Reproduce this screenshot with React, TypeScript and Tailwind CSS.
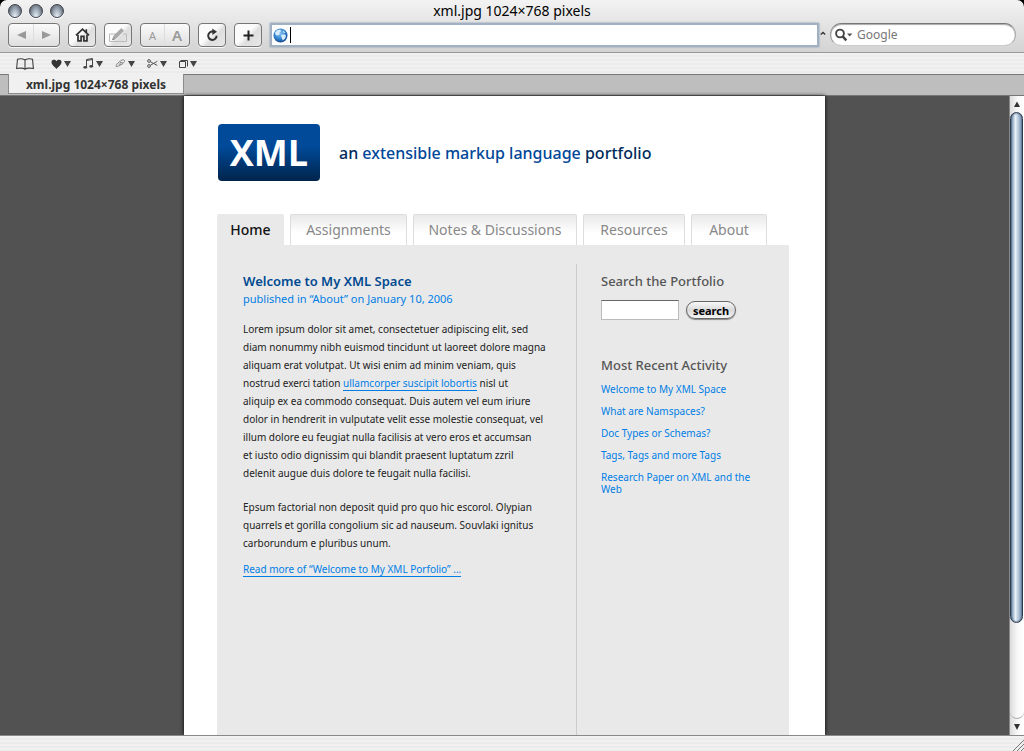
import { ReactNode } from 'react'

const navTabs = [
  { label: 'Home', width: 'w-[67px]', active: true },
  { label: 'Assignments', width: 'w-[117px]', active: false },
  { label: 'Notes & Discussions', width: 'w-[164px]', active: false },
  { label: 'Resources', width: 'w-[102px]', active: false },
  { label: 'About', width: 'w-[76px]', active: false },
]

const recentActivity = [
  'Welcome to My XML Space',
  'What are Namspaces?',
  'Doc Types or Schemas?',
  'Tags, Tags and more Tags',
  'Research Paper on XML and the Web',
]

const pinstripes =
  'bg-[repeating-linear-gradient(180deg,#f1f1f1_0px,#f1f1f1_2px,#ebebeb_2px,#ebebeb_4px)]'

function WindowButton({ label }: { label: string }) {
  return (
    <button
      type="button"
      aria-label={label}
      className="h-[14px] w-[14px] rounded-full border border-[#3e434b] bg-[radial-gradient(ellipse_at_50%_100%,#eef6fc_0%,#a3afbc_45%,#646d78_80%)] shadow-[0_1px_0_#ffffff]"
    />
  )
}

interface ToolButtonProps {
  label: string
  children: ReactNode
}

function ToolButton({ label, children }: ToolButtonProps) {
  return (
    <button
      type="button"
      aria-label={label}
      className="flex h-6 w-7 shrink-0 items-center justify-center rounded-[4px] border border-[#777777] bg-[linear-gradient(135deg,#fbfbfb_45%,#dedede_60%,#e8e8e8)] shadow-[0_1px_0_#f8f8f8]"
    >
      {children}
    </button>
  )
}

function ToolGroup({ children }: { children: ReactNode }) {
  return (
    <div className="flex h-6 shrink-0 items-stretch divide-x divide-[#dddddd] rounded-[4px] border border-[#777777] bg-linear-to-b from-[#fafafa] via-[#ededed] to-[#dfdfdf] shadow-[0_1px_0_#f8f8f8]">
      {children}
    </div>
  )
}

function BookmarkMenu({ label, children }: ToolButtonProps) {
  return (
    <button type="button" aria-label={label} className="flex h-5 items-center gap-[2px]">
      {children}
      <svg width="7" height="6" viewBox="0 0 7 6">
        <path d="M0 0h7L3.5 6z" fill="#444" />
      </svg>
    </button>
  )
}

function TitleBar() {
  return (
    <div className="relative flex h-[22px] items-center px-2">
      <div className="flex gap-[7px]">
        <WindowButton label="Close" />
        <WindowButton label="Minimize" />
        <WindowButton label="Zoom" />
      </div>
      <h1 className="absolute inset-x-0 text-center text-[14px] leading-[22px] text-black">
        xml.jpg 1024×768 pixels
      </h1>
    </div>
  )
}

function Toolbar() {
  return (
    <div className="flex h-[30px] items-start gap-2 px-2 pt-px">
      <ToolGroup>
        <button type="button" aria-label="Back" className="flex w-[25px] items-center justify-center">
          <svg width="9" height="8" viewBox="0 0 9 8">
            <path d="M9 0v8L0 4z" fill="#999" />
          </svg>
        </button>
        <button type="button" aria-label="Forward" className="flex w-[25px] items-center justify-center">
          <svg width="9" height="8" viewBox="0 0 9 8">
            <path d="M0 0v8l9-4z" fill="#999" />
          </svg>
        </button>
      </ToolGroup>
      <ToolButton label="Home">
        <svg width="15" height="14" viewBox="0 0 15 14" fill="none" stroke="#333" strokeWidth="1.7">
          <path d="M1 7.4 7.5 1.2 14 7.4M11.3 4.5V1.2" />
          <path d="M3 6.8v6.1h3.1V8.3h2.8v4.6H12V6.8" />
        </svg>
      </ToolButton>
      <ToolButton label="AutoFill">
        <svg width="20" height="16" viewBox="0 0 20 16" className="shrink-0" fill="none">
          <path d="M8 7H1.500v7.500h17V7H15" stroke="#bbb" />
          <path d="M4.500 12.500 6 8.800 13.300 1.500l2.200 2.200-7.300 7.300z" fill="#aaa" stroke="#999" strokeWidth=".7" />
          <path d="m4.500 12.500 2.200-.6" stroke="#777" />
        </svg>
      </ToolButton>
      <ToolGroup>
        <button type="button" aria-label="Smaller text" className="w-6 pt-px text-[11px] leading-none text-[#999999]">
          A
        </button>
        <button type="button" aria-label="Larger text" className="w-6 text-[15px] leading-none font-semibold text-[#999999]">
          A
        </button>
      </ToolGroup>
      <ToolButton label="Reload">
        <svg width="13" height="14" viewBox="0 0 13 14">
          <path d="M10.6 7.8A4.2 4.2 0 1 1 7 3.6" fill="none" stroke="#333" strokeWidth="2" />
          <path d="M6.3.5 11 3.8 6.3 7z" fill="#333" />
        </svg>
      </ToolButton>
      <ToolButton label="Add bookmark">
        <svg width="11" height="11" viewBox="0 0 11 11">
          <path d="M5.5.5v10M.5 5.5h10" stroke="#222" strokeWidth="2" />
        </svg>
      </ToolButton>
      <div className="flex h-6 min-w-0 flex-1 items-center gap-[2px] border-2 border-[#a2b1c2] bg-white pl-px shadow-[0_0_2px_#8396aa]">
        <svg width="15" height="15" viewBox="0 0 15 15" className="shrink-0">
          <defs>
            <radialGradient id="globe" cx="45%" cy="35%" r="65%">
              <stop offset="0" stopColor="#8fc6f5" />
              <stop offset=".6" stopColor="#3385d2" />
              <stop offset="1" stopColor="#15468c" />
            </radialGradient>
          </defs>
          <circle cx="7.5" cy="7.5" r="7" fill="url(#globe)" />
          <path d="M2 4.5 4.5 2l3-.3.5 1.5-1.6 1.2.4 1.6-2.2 1.4L2.7 7z" fill="#d8ecfb" />
          <path d="m8 7 3.2-.8 1.8 1.5-1 2.8-2.2 2-1-2.3z" fill="#d8ecfb" />
          <path d="m10 2.5 2.3 1.8-.8.9-1.8-.9z" fill="#b9dcf6" />
        </svg>
        <span className="h-4 w-px shrink-0 bg-black" />
        <input aria-label="Address" className="h-full min-w-0 flex-1 bg-transparent text-[13px] outline-none" />
      </div>
      <div className="-ml-2 flex shrink-0 items-start gap-1">
        <svg width="7" height="24" viewBox="0 0 7 24">
          <path d="m1.800 11.500 2.200-2 2.200 2" fill="none" stroke="#333" strokeWidth="1.3" />
        </svg>
        <div className="flex h-[23px] w-[186px] items-center rounded-full border border-t-[#777777] border-r-[#aaaaaa] border-b-[#cccccc] border-l-[#999999] bg-white pl-1 shadow-[inset_0_1px_1px_#aaaaaa]">
          <svg width="18" height="14" viewBox="0 0 18 14" className="shrink-0">
            <circle cx="5" cy="5.5" r="3.9" fill="none" stroke="#444" strokeWidth="1.9" />
            <path d="m7.7 8.4 3.6 4" stroke="#444" strokeWidth="2.4" />
            <path d="M12 5.5h5.4l-2.7 3z" fill="#555" />
          </svg>
          <input
            aria-label="Google search"
            placeholder="Google"
            className="ml-1 min-w-0 flex-1 bg-transparent text-[12px] leading-4 outline-none placeholder:text-[#777777]"
          />
        </div>
      </div>
    </div>
  )
}

function BookmarksBar() {
  return (
    <div className={`flex h-[22px] items-center border-t border-[#999999] px-4 ${pinstripes}`}>
      <button type="button" aria-label="Show all bookmarks" className="mr-[17px]">
        <svg width="18" height="12" viewBox="0 0 18 12" fill="none" stroke="#444" strokeWidth="1.1">
          <path d="M9 2C7.500.6 3.500.3 1.500 1.200L.6 10.600c2.200-.7 6.500-.7 8.400.6 1.900-1.300 6.200-1.300 8.400-.6L16.500 1.200C14.500.3 10.500.6 9 2zM9 2v9.200" />
        </svg>
      </button>
      <div className="flex items-center gap-3">
        <BookmarkMenu label="Favorites">
          <svg width="11" height="10" viewBox="0 0 11 10">
            <path d="M5.500 10C3.500 7.500.5 6 .5 3 .5.5 4 0 5.500 2.300 7 0 10.500.5 10.500 3c0 3-3 4.500-5 7z" fill="#333" />
          </svg>
        </BookmarkMenu>
        <BookmarkMenu label="Music">
          <svg width="11" height="11" viewBox="0 0 11 11">
            <path d="M3.500 9V1.500l6-1V8M3.500 2.500l6-1" fill="none" stroke="#444" />
            <ellipse cx="2.200" cy="9.300" rx="1.900" ry="1.400" fill="#444" />
            <ellipse cx="8.200" cy="8.300" rx="1.900" ry="1.400" fill="#444" />
          </svg>
        </BookmarkMenu>
        <BookmarkMenu label="Writing">
          <svg width="11" height="9" viewBox="0 0 11 9">
            <path d="M1 7.500c0-1.500 1-3 3-4.500L7 1c1.500-.7 3 .2 2.500 1.500C9 4 5.500 6.500 3.500 7zM3.500 5l3.500.3M5 3.500l3 .3" fill="none" stroke="#888" />
          </svg>
        </BookmarkMenu>
        <BookmarkMenu label="Clippings">
          <svg width="11" height="9" viewBox="0 0 11 9" fill="none" stroke="#555">
            <circle cx="2" cy="2" r="1.400" />
            <circle cx="2" cy="7" r="1.400" />
            <path d="m3.300 2.700 7 3.800M3.300 6.300l7-4" />
          </svg>
        </BookmarkMenu>
        <BookmarkMenu label="Windows">
          <svg width="9" height="8" viewBox="0 0 9 8" fill="none" stroke="#444">
            <path d="M.5 1.500h6v6h-6zM1.500.500h7v6" />
          </svg>
        </BookmarkMenu>
      </div>
    </div>
  )
}

function WindowTabs() {
  return (
    <div className="flex h-[22px] items-start border-t border-b border-t-[#777777] border-b-[#777777] bg-[#bebebe] pl-2">
      <button
        type="button"
        className="-mt-px h-5 w-44 border border-t-0 border-[#8c8c8c] bg-[#f0f0f0] pt-[3px] text-[12px] leading-4 font-bold text-[#333333]"
      >
        xml.jpg 1024×768 pixels
      </button>
    </div>
  )
}

function PageHeader() {
  return (
    <header className="flex items-center gap-[19px] pt-7 pl-px">
      <div className="flex h-[57px] w-[102px] items-center justify-center rounded-[4px] bg-linear-to-b from-[#004a99] from-40% to-[#00244c] font-['Open_Sans',sans-serif] text-[36px] leading-none font-bold text-white">
        XML
      </div>
      <p className="text-[16px] leading-6 font-medium text-[#002b5c]">
        an <span className="text-[#004799]">extensible markup language</span> portfolio
      </p>
    </header>
  )
}

function PageNav() {
  return (
    <nav className="mt-[33px] flex gap-[6px]">
      {navTabs.map((tab) => (
        <a
          key={tab.label}
          href="#"
          className={`${tab.width} h-[31px] rounded-t-[2px] border border-b-0 text-center text-[14px] leading-[29px] whitespace-nowrap ${
            tab.active
              ? 'border-[#e9e9e9] bg-[#e9e9e9] font-medium text-[#111111]'
              : 'border-[#dddddd] bg-linear-to-b from-[#e9e9e9] to-white to-60% text-[#888888]'
          }`}
        >
          {tab.label}
        </a>
      ))}
    </nav>
  )
}

function Article() {
  return (
    <article className="min-w-0 flex-1 pt-2 pl-[26px] text-[10px]">
      <h2 className="text-[13px] leading-[18px] font-semibold text-[#004a91]">Welcome to My XML Space</h2>
      <p className="text-[11px] leading-[18px] text-[#007ee5]">published in “About” on January 10, 2006</p>
      <p className="mt-3 leading-[18px] text-[#222222]">
        Lorem ipsum dolor sit amet, consectetuer adipiscing elit, sed
        <br />
        diam nonummy nibh euismod tincidunt ut laoreet dolore magna
        <br />
        aliquam erat volutpat. Ut wisi enim ad minim veniam, quis
        <br />
        nostrud exerci tation{' '}
        <a href="#" className="border-b border-[#007ee5] text-[#007ee5]">
          ullamcorper suscipit lobortis
        </a>{' '}
        nisl ut
        <br />
        aliquip ex ea commodo consequat. Duis autem vel eum iriure
        <br />
        dolor in hendrerit in vulputate velit esse molestie consequat, vel
        <br />
        illum dolore eu feugiat nulla facilisis at vero eros et accumsan
        <br />
        et iusto odio dignissim qui blandit praesent luptatum zzril
        <br />
        delenit augue duis dolore te feugait nulla facilisi.
      </p>
      <p className="mt-4 leading-[18px] text-[#222222]">
        Epsum factorial non deposit quid pro quo hic escorol. Olypian
        <br />
        quarrels et gorilla congolium sic ad nauseum. Souvlaki ignitus
        <br />
        carborundum e pluribus unum.
      </p>
      <p className="mt-2 leading-[18px]">
        <a href="#" className="border-b border-[#007ee5] text-[#007ee5]">
          Read more of “Welcome to My XML Porfolio” ...
        </a>
      </p>
    </article>
  )
}

function Sidebar() {
  return (
    <aside className="w-[213px] shrink-0 border-l border-[#cccccc] pt-2 pr-8 pl-6 text-[#555555]">
      <form onSubmit={(e) => e.preventDefault()}>
        <label htmlFor="portfolio-search" className="block text-[13px] leading-[18px] font-medium">
          Search the Portfolio
        </label>
        <div className="mt-[10px] flex items-center gap-[7px]">
          <input
            id="portfolio-search"
            className="h-5 w-[78px] border border-[#bbbbbb] border-t-[#666666] bg-white px-1 text-[11px] outline-none"
          />
          <button
            type="submit"
            className="h-[18px] w-[50px] rounded-full border border-[#666666] bg-linear-to-b from-[#f8f8f8] via-[#dadada] to-[#f4f4f4] text-[11px] leading-none font-bold text-black shadow-[0_1px_1px_#888888]"
          >
            search
          </button>
        </div>
      </form>
      <h3 className="mt-9 text-[13px] leading-[18px] font-medium">Most Recent Activity</h3>
      <ul className="mt-[9px] flex flex-col gap-[10px]">
        {recentActivity.map((item) => (
          <li key={item} className="text-[10px] leading-3">
            <a href="#" className="text-[#007ee5]">
              {item}
            </a>
          </li>
        ))}
      </ul>
    </aside>
  )
}

function ScrollBar() {
  return (
    <div className="flex w-[15px] shrink-0 flex-col items-center border-l border-[#888888] bg-linear-to-r from-[#dcdcdc] via-[#f7f7f7] to-white">
      <svg width="14" height="16" viewBox="0 0 14 16" className="shrink-0">
        <path d="M7 5.500 10 11H4z" fill="#333" />
      </svg>
      <div className="flex w-full flex-1 flex-col">
        <div className="w-[13px] flex-[16] rounded-full border border-[#2b3b50] bg-linear-to-r from-[#6e88a5] via-[#eaf3fb] via-40% to-[#7893b1] shadow-[inset_0_0_2px_#1e334c]" />
        <div className="w-full flex-[3] rounded-b-full border-b border-[#aaaaaa]" />
      </div>
      <svg width="14" height="16" viewBox="0 0 14 16" className="shrink-0">
        <path d="M4 5h6l-3 6z" fill="#333" />
      </svg>
    </div>
  )
}

function StatusBar() {
  return (
    <div className={`flex h-4 items-end justify-end border-t border-[#888888] ${pinstripes}`}>
      <svg width="12" height="12" viewBox="0 0 12 12" stroke="#777">
        <path d="M1 12 12 1M5 12l7-7M9 12l3-3" />
      </svg>
    </div>
  )
}

export default function App() {
  return (
    <div className="flex min-h-screen flex-col bg-black font-['Noto_Sans',sans-serif]">
      <div className="rounded-t-[7px] bg-linear-to-b from-[#f3f3f3] to-[#d3d3d3]">
        <TitleBar />
        <Toolbar />
      </div>
      <BookmarksBar />
      <WindowTabs />
      <div className="flex flex-1">
        <main className="flex min-w-0 flex-1 justify-center bg-[#525252]">
          <div className="flex w-full max-w-[641px] flex-col bg-white pr-9 pl-[33px] shadow-[0_0_4px_#000000]">
            <PageHeader />
            <PageNav />
            <div className="flex flex-1 bg-[#e9e9e9] pt-[19px]">
              <Article />
              <Sidebar />
            </div>
          </div>
        </main>
        <ScrollBar />
      </div>
      <StatusBar />
    </div>
  )
}
